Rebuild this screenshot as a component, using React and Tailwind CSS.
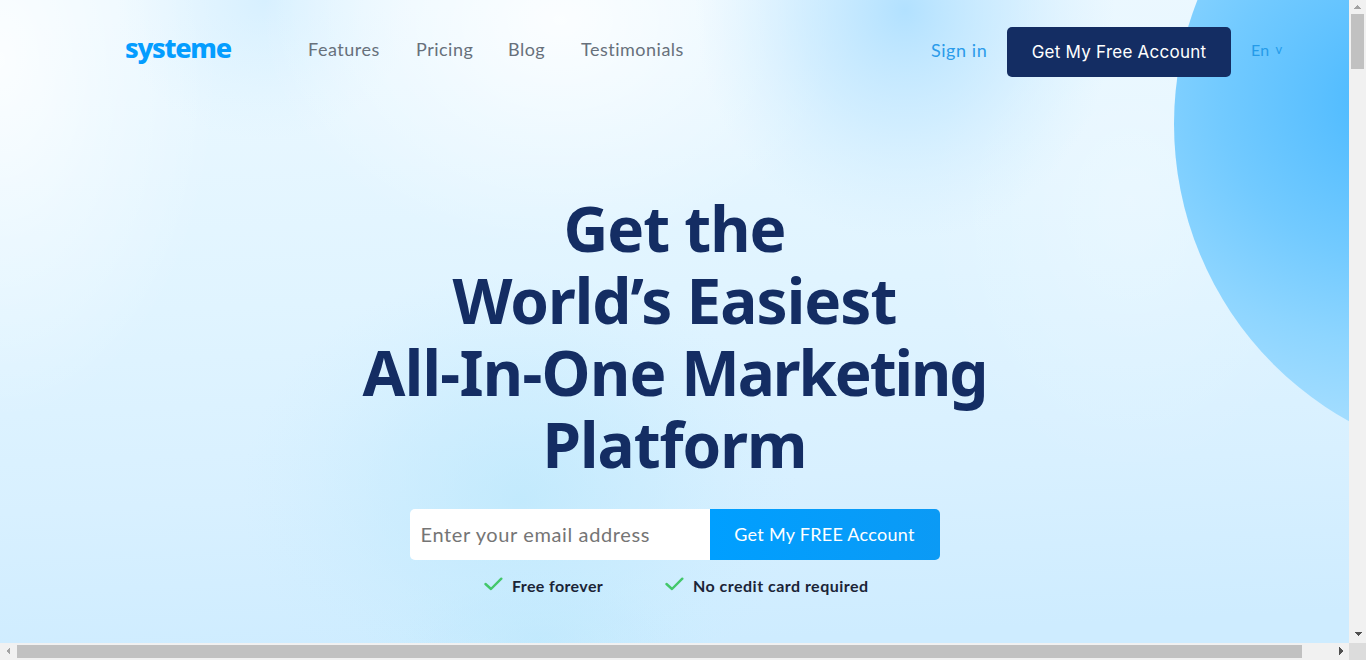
import React, { useState } from 'react';
import clsx from 'clsx';

const navLinks = [
    { label: 'Features', className: 'w-[73px]' },
    { label: 'Pricing', className: 'w-[57px]' },
    { label: 'Blog', className: 'w-[38px]' },
    { label: 'Testimonials', className: 'w-[104px]' },
];

const perks = [
    { text: 'Free forever', className: 'w-[91px] tracking-[0.38px]' },
    { text: 'No credit card required', className: 'w-[175px] tracking-[0.48px]' },
];

const Backdrop = () => (
    <svg
        className="absolute inset-0 h-full w-full"
        viewBox="0 0 1349 643"
        preserveAspectRatio="none"
        aria-hidden="true"
    >
        <defs>
            <linearGradient id="sky" x1="0.4" y1="0" x2="0.5" y2="1">
                <stop offset="0" stopColor="#ebf8ff" />
                <stop offset="0.45" stopColor="#e0f4ff" />
                <stop offset="0.75" stopColor="#d8f0ff" />
                <stop offset="1" stopColor="#ceecff" />
            </linearGradient>
            <radialGradient id="white">
                <stop offset="0" stopColor="#ffffff" stopOpacity="0.95" />
                <stop offset="0.5" stopColor="#ffffff" stopOpacity="0.4" />
                <stop offset="1" stopColor="#ffffff" stopOpacity="0" />
            </radialGradient>
            <radialGradient id="azure">
                <stop offset="0" stopColor="#b2e1ff" />
                <stop offset="0.5" stopColor="#bfe6ff" stopOpacity="0.55" />
                <stop offset="1" stopColor="#cfecff" stopOpacity="0" />
            </radialGradient>
            <radialGradient id="aqua">
                <stop offset="0" stopColor="#b9e7fc" />
                <stop offset="0.5" stopColor="#bfe9fd" stopOpacity="0.55" />
                <stop offset="1" stopColor="#cdeefe" stopOpacity="0" />
            </radialGradient>
            <radialGradient
                id="disc"
                gradientUnits="userSpaceOnUse"
                cx="0"
                cy="0"
                r="1"
                gradientTransform="translate(1400 100) scale(400 350)"
            >
                <stop offset="0" stopColor="#45b8ff" />
                <stop offset="0.2" stopColor="#5bc0ff" />
                <stop offset="0.45" stopColor="#72caff" />
                <stop offset="0.7" stopColor="#8dd5ff" />
                <stop offset="1" stopColor="#a9dfff" />
            </radialGradient>
        </defs>
        <rect width="1349" height="643" fill="url(#sky)" />
        <ellipse cx="0" cy="60" rx="220" ry="360" fill="url(#white)" opacity="0.85" />
        <ellipse cx="265" cy="0" rx="150" ry="140" fill="url(#azure)" opacity="0.35" />
        <ellipse cx="560" cy="20" rx="300" ry="230" fill="url(#white)" opacity="0.85" />
        <ellipse cx="1130" cy="200" rx="210" ry="280" fill="url(#white)" opacity="0.25" />
        <ellipse cx="905" cy="10" rx="210" ry="230" fill="url(#azure)" />
        <ellipse cx="520" cy="500" rx="280" ry="230" fill="url(#aqua)" opacity="0.7" />
        <ellipse cx="540" cy="640" rx="190" ry="90" fill="url(#aqua)" opacity="0.5" />
        <circle cx="1514" cy="124" r="340" fill="url(#disc)" />
    </svg>
);

const Arrow = ({ points, muted }) => (
    <svg width="17" height="17" viewBox="0 0 17 17" className="shrink-0" shapeRendering="crispEdges" aria-hidden="true">
        <polygon points={points} className={muted ? 'fill-[#a3a3a3]' : 'fill-[#505050]'} />
    </svg>
);

const Header = () => (
    <header className="flex h-[50px] items-center">
        <a href="#" className="-mt-[8px] w-[106px] whitespace-nowrap font-['Noto_Sans',sans-serif] text-[27px] leading-[42px] font-extrabold tracking-[-1.3px] text-[#049dff]">
            systeme
        </a>
        <nav className="ml-[77px] flex gap-[35px]">
            {navLinks.map((link) => (
                <a key={link.label} href="#" className={clsx('-mt-[6px] text-[18px] tracking-[0.5px] whitespace-nowrap text-[#67707b]', link.className)}>
                    {link.label}
                </a>
            ))}
        </nav>
        <a href="#" className="-mt-1 ml-auto w-[57px] text-[18px] tracking-[0.55px] whitespace-nowrap text-[#2b9bea]">Sign in</a>
        <button className="ml-[19px] h-[50px] w-[224px] rounded-[5px] bg-[#142d63] pt-[2px] font-['Inter',sans-serif] text-[17px] tracking-[0.25px] whitespace-nowrap text-white">
            Get My Free Account
        </button>
        <button className="-mt-[5px] ml-5 flex w-[33px] items-center gap-[6px] text-[16px] tracking-[0.3px] text-[#259be9]">
            En <span className="text-[13px]">v</span>
        </button>
    </header>
);

const Headline = () => (
    <h1 className="text-center font-['Noto_Sans',sans-serif] text-[62px] leading-[72px] font-bold whitespace-nowrap text-[#142d63]">
        <span className="block tracking-[-1px]">Get the</span>
        <span className="block tracking-[-0.95px]">World’s Easiest</span>
        <span className="block tracking-[-0.7px]">
            All-In-One <span className="tracking-[-2.05px]">Marketing</span>
        </span>
        <span className="block tracking-[-1px]">Platform</span>
    </h1>
);

const SignupForm = () => {
    const [email, setEmail] = useState('');

    return (
        <form className="flex h-[51px] w-[530px] overflow-hidden rounded-[5px]" onSubmit={(e) => e.preventDefault()}>
            <input
                type="email"
                value={email}
                onChange={(e) => setEmail(e.target.value)}
                placeholder="Enter your email address"
                className="w-[300px] bg-white px-[11px] pb-[2px] text-[20px] tracking-[0.62px] text-gray-800 outline-none placeholder:text-[#757575]"
            />
            <button className="w-[230px] bg-linear-to-r from-[#009fff] to-[#0b9af5] text-[18px] tracking-[0.28px] whitespace-nowrap text-white">
                Get My FREE Account
            </button>
        </form>
    );
};

const App = () => (
    <div className="grid h-[660px] w-[1366px] grid-cols-[1349px_17px] grid-rows-[643px_17px] overflow-hidden bg-[#f1f1f1] font-['Lato',sans-serif]">
        <main className="relative overflow-hidden">
            <Backdrop />
            <div className="relative flex h-full flex-col pt-[27px]">
                <div className="pr-[65px] pl-[125px]">
                    <Header />
                </div>
                <section className="mt-[115px] flex flex-col items-center">
                    <Headline />
                    <div className="mt-[29px]">
                        <SignupForm />
                    </div>
                    <ul className="mt-[14px] flex gap-[62px] pl-[3px]">
                        {perks.map((perk) => (
                            <li key={perk.text} className="flex items-center gap-[9px] text-[16px] font-bold text-[#1b2437]">
                                <svg width="19" height="14" viewBox="0 0 19 14" fill="none" className="-mt-1" aria-hidden="true">
                                    <path d="M1.5 7 L7 12 L17.3 1.7" stroke="#43c76a" strokeWidth="2.4" strokeLinecap="round" strokeLinejoin="round" />
                                </svg>
                                <span className={clsx('whitespace-nowrap', perk.className)}>{perk.text}</span>
                            </li>
                        ))}
                    </ul>
                </section>
            </div>
        </main>
        <div className="flex flex-col items-center justify-between">
            <div className="flex flex-col items-center">
                <div className="h-[14px] overflow-hidden">
                    <Arrow points="5,9 12,9 8.5,5" muted />
                </div>
                <div className="h-[55px] w-[13px] bg-[#c1c1c1]" />
            </div>
            <Arrow points="5,6 13,6 9,10" />
        </div>
        <div className="flex items-center justify-between">
            <div className="flex items-center">
                <Arrow points="10,4 10,12 6,8" muted />
                <div className="h-[13px] w-[1285px] bg-[#c1c1c1]" />
            </div>
            <Arrow points="7,4 7,12 11,8" />
        </div>
        <div className="bg-[#dcdcdc]" />
    </div>
);

export default App;
